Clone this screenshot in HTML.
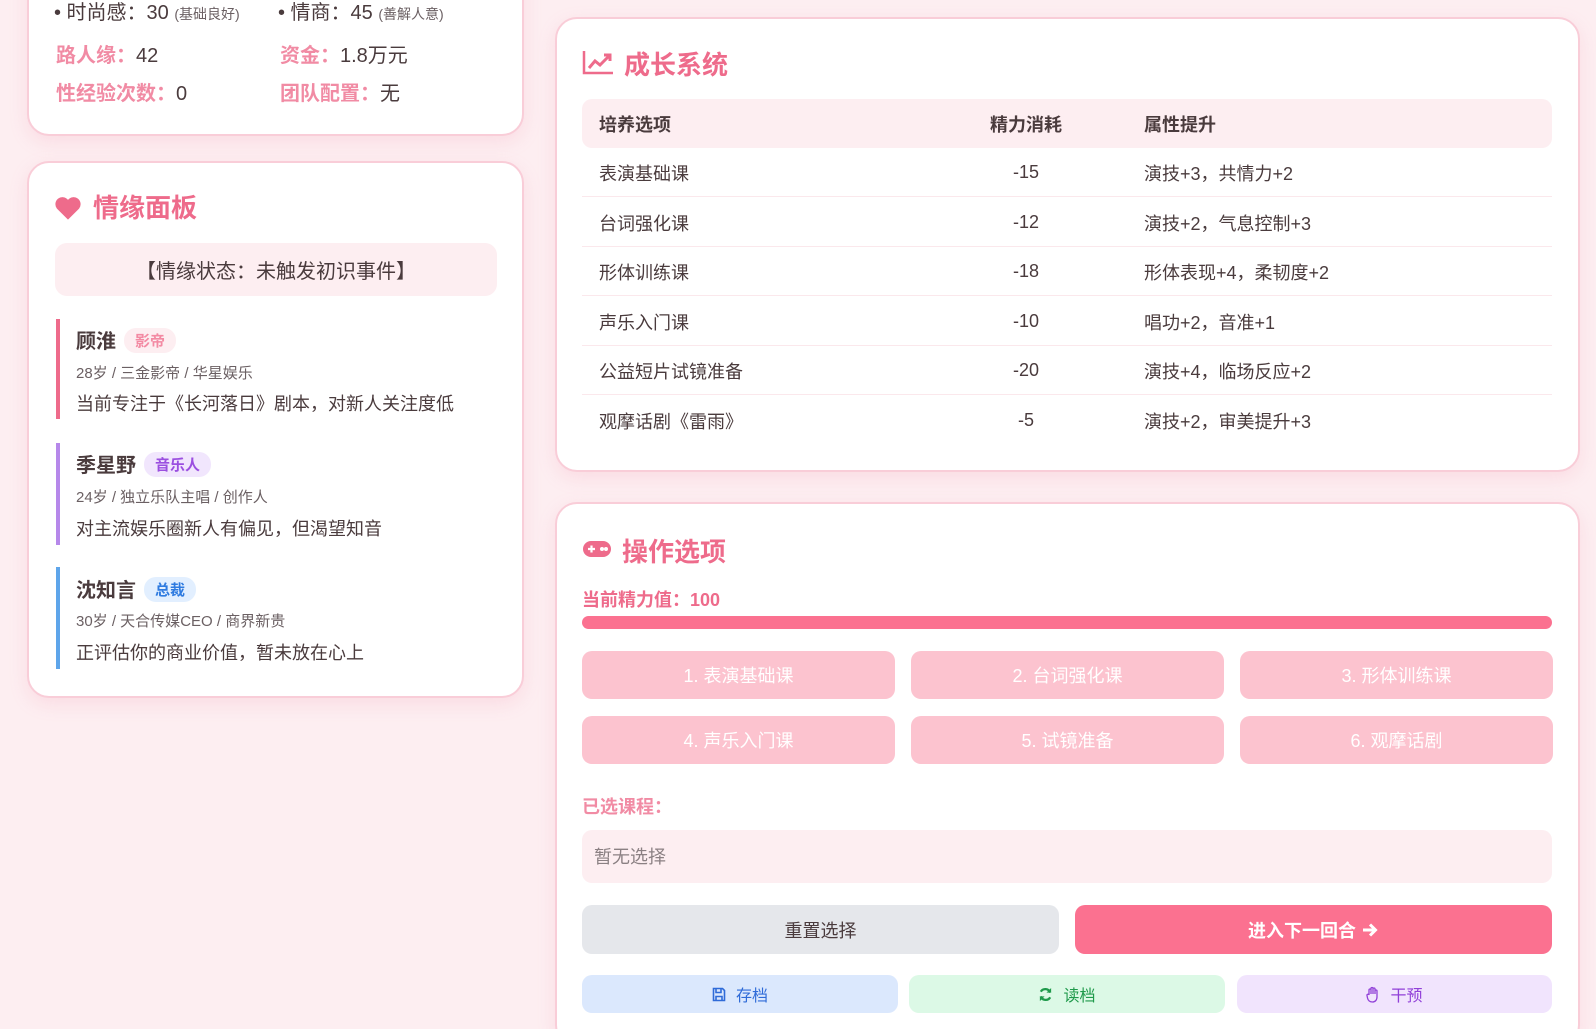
<!DOCTYPE html>
<html><head><meta charset="utf-8"><style>
*{box-sizing:border-box;margin:0;padding:0}
html{width:1596px;height:1029px;overflow:hidden}
body{width:1596px;height:1029px;overflow:hidden;background:#fdeef1;font-family:"Liberation Sans","Noto Sans CJK SC",sans-serif;color:#4a3b3d;position:relative}
.card{position:absolute;background:#fff;border:2px solid #f9cdd8;border-radius:22px;box-shadow:0 6px 18px rgba(240,140,165,.18)}
.a{position:absolute;white-space:nowrap}
.t{font-size:26px;font-weight:bold;color:#ee6b8b}
.lbl{color:#f18ba4;font-weight:bold}
.row{position:absolute;left:582px;width:970px;height:49px;border-bottom:1px solid #fbe8ec;font-size:18px}
.row span{position:absolute;top:12px}
.row span.c2{top:14px}
.c1{left:17px}.c2{left:444px;transform:translateX(-50%)}.c3{left:562px}
.btn{position:absolute;border-radius:10px;display:flex;align-items:center;justify-content:center;font-size:18px}
.opt{background:#fcc3cf;color:#fff;height:48px;width:313px}
.bar{position:absolute;left:56px;width:4px}
.nm{font-size:20px;font-weight:bold;color:#4a3b3d}
.tag{display:inline-block;font-size:15px;font-weight:bold;padding:2px 11px;border-radius:12px;margin-left:8px;vertical-align:2px}
.sub{font-size:15px;color:#6b6063}
.desc{font-size:18px}
</style></head><body>

<div class="card" style="left:27px;top:-300px;width:497px;height:436px"></div>
<div class="a" style="left:54px;top:-4px;font-size:20px">• 时尚感：30 <span style="font-size:14px;color:#6b6063">(基础良好)</span></div>
<div class="a" style="left:278px;top:-4px;font-size:20px">• 情商：45 <span style="font-size:14px;color:#6b6063">(善解人意)</span></div>
<div class="a" style="left:56px;top:39px;font-size:20px"><span class="lbl">路人缘：</span>42</div>
<div class="a" style="left:280px;top:39px;font-size:20px"><span class="lbl">资金：</span>1.8万元</div>
<div class="a" style="left:56px;top:77px;font-size:20px"><span class="lbl">性经验次数：</span>0</div>
<div class="a" style="left:280px;top:77px;font-size:20px"><span class="lbl">团队配置：</span>无</div>

<div class="card" style="left:27px;top:161px;width:497px;height:537px"></div>
<svg class="a" style="left:54px;top:195px" width="28" height="26" viewBox="0 0 24 22"><path d="M12 21 L2.5 11.5 A5.5 5.5 0 0 1 12 4 A5.5 5.5 0 0 1 21.5 11.5 Z" fill="#ee6b8b"/></svg>
<div class="a t" style="left:93px;top:188px">情缘面板</div>
<div class="a" style="left:55px;top:243px;width:442px;height:53px;background:#fdeef1;border-radius:12px;display:flex;align-items:center;justify-content:center;font-size:20px">【情缘状态：未触发初识事件】</div>

<div class="bar" style="top:319px;height:100px;background:#ee6b8b"></div>
<div class="a" style="left:76px;top:325px"><span class="nm">顾淮</span><span class="tag" style="background:#fdeef1;color:#f38aa3">影帝</span></div>
<div class="a sub" style="left:76px;top:362px">28岁 / 三金影帝 / 华星娱乐</div>
<div class="a desc" style="left:76px;top:390px">当前专注于《长河落日》剧本，对新人关注度低</div>

<div class="bar" style="top:443px;height:102px;background:#b688ea"></div>
<div class="a" style="left:76px;top:449px"><span class="nm">季星野</span><span class="tag" style="background:#f1e6fd;color:#9b4fe0">音乐人</span></div>
<div class="a sub" style="left:76px;top:486px">24岁 / 独立乐队主唱 / 创作人</div>
<div class="a desc" style="left:76px;top:515px">对主流娱乐圈新人有偏见，但渴望知音</div>

<div class="bar" style="top:567px;height:102px;background:#5ea5ea"></div>
<div class="a" style="left:76px;top:574px"><span class="nm">沈知言</span><span class="tag" style="background:#e2efff;color:#2f7be0">总裁</span></div>
<div class="a sub" style="left:76px;top:610px">30岁 / 天合传媒CEO / 商界新贵</div>
<div class="a desc" style="left:76px;top:639px">正评估你的商业价值，暂未放在心上</div>

<div class="card" style="left:555px;top:17px;width:1025px;height:455px"></div>
<svg class="a" style="left:582px;top:50px" width="32" height="25" viewBox="0 0 32 25"><path d="M2 1 V23 H31" stroke="#ee6b8b" stroke-width="2.5" fill="none"/><path d="M7 18 L13 11 L18 15 L27 6" stroke="#ee6b8b" stroke-width="3" fill="none"/><path d="M22 5 H28 V11" stroke="#ee6b8b" stroke-width="3" fill="none"/></svg>
<div class="a t" style="left:624px;top:45px">成长系统</div>
<div class="a" style="left:582px;top:99px;width:970px;height:49px;background:#fdeef1;border-radius:10px;font-size:18px;font-weight:bold">
<span class="a" style="left:17px;top:12px">培养选项</span><span class="a" style="left:444px;top:12px;transform:translateX(-50%)">精力消耗</span><span class="a" style="left:562px;top:12px">属性提升</span></div>
<div class="row" style="top:148px"><span class="c1">表演基础课</span><span class="c2">-15</span><span class="c3">演技+3，共情力+2</span></div>
<div class="row" style="top:198px"><span class="c1">台词强化课</span><span class="c2">-12</span><span class="c3">演技+2，气息控制+3</span></div>
<div class="row" style="top:247px"><span class="c1">形体训练课</span><span class="c2">-18</span><span class="c3">形体表现+4，柔韧度+2</span></div>
<div class="row" style="top:297px"><span class="c1">声乐入门课</span><span class="c2">-10</span><span class="c3">唱功+2，音准+1</span></div>
<div class="row" style="top:346px"><span class="c1">公益短片试镜准备</span><span class="c2">-20</span><span class="c3">演技+4，临场反应+2</span></div>
<div class="row" style="top:396px;border:none"><span class="c1">观摩话剧《雷雨》</span><span class="c2">-5</span><span class="c3">演技+2，审美提升+3</span></div>

<div class="card" style="left:555px;top:502px;width:1025px;height:545px"></div>
<svg class="a" style="left:582px;top:539px" width="30" height="20" viewBox="0 0 30 20"><rect x="1" y="2" width="28" height="16" rx="8" fill="#ee6b8b"/><path d="M6 10h7M9.5 6.5v7" stroke="#fff" stroke-width="2.2"/><circle cx="20" cy="10" r="2" fill="#fff"/><circle cx="24" cy="10" r="2" fill="#fff"/></svg>
<div class="a t" style="left:622px;top:532px">操作选项</div>
<div class="a lbl" style="left:582px;top:586px;font-size:18px;color:#ee6b8b">当前精力值：100</div>
<div class="a" style="left:582px;top:616px;width:970px;height:13px;background:#fb7190;border-radius:7px"></div>
<div class="btn opt" style="left:582px;top:651px">1. 表演基础课</div>
<div class="btn opt" style="left:911px;top:651px">2. 台词强化课</div>
<div class="btn opt" style="left:1240px;top:651px">3. 形体训练课</div>
<div class="btn opt" style="left:582px;top:716px">4. 声乐入门课</div>
<div class="btn opt" style="left:911px;top:716px">5. 试镜准备</div>
<div class="btn opt" style="left:1240px;top:716px">6. 观摩话剧</div>
<div class="a lbl" style="left:582px;top:793px;font-size:18px">已选课程：</div>
<div class="a" style="left:582px;top:830px;width:970px;height:53px;background:#fdeef1;border-radius:10px;font-size:18px;color:#8b8083;padding:13px 12px">暂无选择</div>
<div class="btn" style="left:582px;top:905px;width:477px;height:49px;background:#e5e7eb;color:#4a3b3d">重置选择</div>
<div class="btn" style="left:1075px;top:905px;width:477px;height:49px;background:#fb7190;color:#fff;font-weight:bold">进入下一回合&nbsp;<svg width="18" height="16" viewBox="0 0 18 16"><path d="M2 8h12M9 2.5L14.5 8 9 13.5" stroke="#fff" stroke-width="3" fill="none"/></svg></div>
<div class="btn" style="left:582px;top:975px;width:316px;height:38px;background:#dbe8fd;color:#2f6bd8;font-size:16px"><svg width="14" height="15" viewBox="0 0 14 15" style="margin-right:10px"><path d="M1.5 1.5h9l2 2v10h-11z M4 1.5v4h5v-4 M4 13.5v-4h6v4" stroke="#2f6bd8" stroke-width="1.6" fill="none"/></svg>存档</div>
<div class="btn" style="left:909px;top:975px;width:316px;height:38px;background:#dcf9e6;color:#1f9a4b;font-size:16px"><svg width="15" height="15" viewBox="0 0 16 16" style="margin-right:10px"><path d="M13 6A5.5 5.5 0 0 0 3 5M3 10a5.5 5.5 0 0 0 10 1" stroke="#1f9a4b" stroke-width="2.4" fill="none"/><path d="M14 1v5h-5z M2 15v-5h5z" fill="#1f9a4b"/></svg>读档</div>
<div class="btn" style="left:1237px;top:975px;width:315px;height:38px;background:#f1e4fd;color:#9140d8;font-size:16px"><svg width="14" height="17" viewBox="0 0 14 17" style="margin-right:10px"><path d="M3 9V4a1 1 0 0 1 2 0v4V2.5a1 1 0 0 1 2 0V8V3a1 1 0 0 1 2 0v5V5a1 1 0 0 1 2 0v6c0 3-2 5-4.5 5S2 14.5 1.5 12L1 9.5a1 1 0 0 1 2-.5z" stroke="#9140d8" stroke-width="1.3" fill="none"/></svg>干预</div>
</body></html>
